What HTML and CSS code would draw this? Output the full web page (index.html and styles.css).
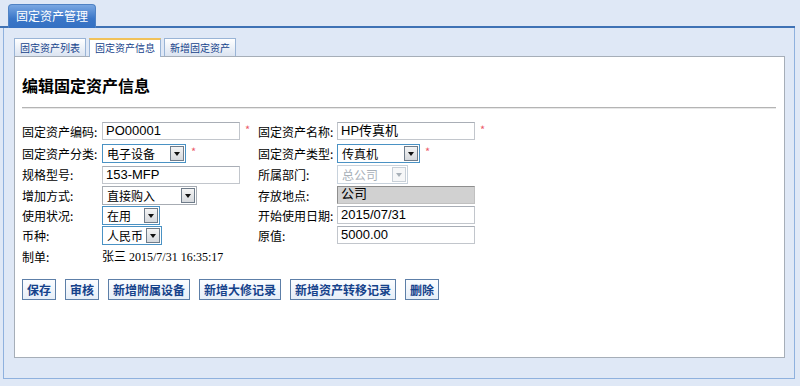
FILE: index.html
```html
<!DOCTYPE html>
<html lang="zh-CN">
<head>
    <meta charset="UTF-8">
    <title>固定资产管理</title>
    <link rel="stylesheet" href="styles.css">
</head>
<body>

    <div class="header">
        <div class="main-tab">固定资产管理</div>
    </div>

    <div class="panel">
        <div class="sub-tabs">
            <div class="sub-tab">固定资产列表</div>
            <div class="sub-tab active">固定资产信息</div>
            <div class="sub-tab">新增固定资产</div>
        </div>

        <div class="content">
            <h1>编辑固定资产信息</h1>
            <div class="rule"></div>

            <div class="form">
                <!-- row 1 -->
                <div class="label">固定资产编码:</div>
                <div class="field"><div class="input w138">PO00001</div><span class="req">*</span></div>
                <div class="label">固定资产名称:</div>
                <div class="field"><div class="input w138">HP传真机</div><span class="req">*</span></div>

                <!-- row 2 -->
                <div class="label">固定资产分类:</div>
                <div class="field">
                    <div class="select focus w84"><span class="sel-text">电子设备</span><span class="arrow"></span></div><span class="req">*</span>
                </div>
                <div class="label">固定资产类型:</div>
                <div class="field">
                    <div class="select focus w83"><span class="sel-text">传真机</span><span class="arrow"></span></div><span class="req">*</span>
                </div>

                <!-- row 3 -->
                <div class="label">规格型号:</div>
                <div class="field"><div class="input w138">153-MFP</div></div>
                <div class="label">所属部门:</div>
                <div class="field">
                    <div class="select disabled w71"><span class="sel-text">总公司</span><span class="arrow"></span></div>
                </div>

                <!-- row 4 -->
                <div class="label">增加方式:</div>
                <div class="field">
                    <div class="select w95"><span class="sel-text">直接购入</span><span class="arrow"></span></div>
                </div>
                <div class="label">存放地点:</div>
                <div class="field"><div class="input readonly w138">公司</div></div>

                <!-- row 5 -->
                <div class="label">使用状况:</div>
                <div class="field">
                    <div class="select focus w58"><span class="sel-text">在用</span><span class="arrow"></span></div>
                </div>
                <div class="label">开始使用日期:</div>
                <div class="field"><div class="input w138">2015/07/31</div></div>

                <!-- row 6 -->
                <div class="label">币种:</div>
                <div class="field">
                    <div class="select focus w60"><span class="sel-text">人民币</span><span class="arrow"></span></div>
                </div>
                <div class="label">原值:</div>
                <div class="field"><div class="input w138">5000.00</div></div>

                <!-- row 7 -->
                <div class="label">制单:</div>
                <div class="field maker">张三 2015/7/31 16:35:17</div>
                <div></div>
                <div></div>
            </div>

            <div class="buttons">
                <button>保存</button>
                <button>审核</button>
                <button>新增附属设备</button>
                <button>新增大修记录</button>
                <button>新增资产转移记录</button>
                <button>删除</button>
            </div>
        </div>
    </div>

</body>
</html>
```

FILE: styles.css
```css
body {
    margin: 0;
    background-color: #dfe8f6;
    font-family: "Noto Sans CJK SC", sans-serif;
    font-size: 12px;
    color: #000;
}

/* top tab strip */
.header {
    width: 795px;
    height: 28px;
    padding-top: 4px;
    box-sizing: border-box;
    padding-left: 8px;
    border-bottom: 2px solid #3f72b5;
}
.main-tab {
    width: 88px;
    height: 24px;
    box-sizing: border-box;
    border: 1px solid #4f82c4;
    border-bottom: none;
    border-radius: 4px 4px 0 0;
    background: linear-gradient(#79a7e2, #3a76c8 60%, #3470c2);
    color: #fff;
    font-size: 12px;
    line-height: 22px;
    text-align: center;
}

.panel {
    margin-left: 3px;
    width: 792px;
    height: 351px;
    box-sizing: border-box;
    border: 1px solid #8fb1de;
    border-top: none;
    padding: 10px 9px 0 10px;
}

/* inner tabs */
.sub-tabs {
    display: flex;
    gap: 3px;
    height: 18px;
}
.sub-tab {
    width: 72px;
    height: 18px;
    box-sizing: border-box;
    border: 1px solid #99b4d6;
    border-bottom: none;
    background: linear-gradient(#ffffff, #dbe4f1);
    color: #15428b;
    font-size: 10px;
    line-height: 17px;
    text-align: center;
}
.sub-tab.active {
    background: #fff;
    border-top: 2px solid #f1c25a;
    line-height: 15px;
    height: 19px;
    margin-bottom: -1px;
    position: relative;
}

.content {
    height: 302px;
    box-sizing: border-box;
    background: #fff;
    border: 1px solid #a6aeb8;
    padding: 18px 8px 0 7px;
}

h1 {
    margin: 0;
    font-size: 16px;
    line-height: 20px;
    font-weight: bold;
}
.rule {
    margin-top: 12px;
    border-top: 1px solid #b4b4b4;
    border-bottom: 1px solid #e8e8e8;
}

/* form grid */
.form {
    display: grid;
    grid-template-columns: 80px 156px 79px 160px;
    grid-template-rows: 22px 22px 21px 20px 20px 20px 22px;
    margin-top: 11px;
    align-items: center;
}
.label {
    font-size: 12px;
    white-space: nowrap;
}
.field {
    display: flex;
    align-items: center;
}
.input {
    height: 18px;
    box-sizing: border-box;
    border: 1px solid #c2c6cc;
    border-top-color: #a9aeb6;
    padding-left: 3px;
    font-family: "Liberation Sans", "Noto Sans CJK SC", sans-serif;
    font-size: 13px;
    line-height: 16px;
    background: #fff;
}
.input.readonly {
    background: #d1d1d1;
    border-color: #8e8e8e #c0c0c0 #c0c0c0 #8e8e8e;
    line-height: 14px;
}
.req {
    color: #ec5a6a;
    font-size: 11px;
    margin-left: 5px;
    align-self: flex-start;
    line-height: 12px;
    margin-top: 1px;
}

.select {
    height: 19px;
    box-sizing: border-box;
    border: 1px solid #a7acb3;
    display: flex;
    align-items: center;
    background: #fff;
}
.select.focus {
    border-color: #4a92c4;
}
.sel-text {
    flex: 1;
    padding-left: 4px;
    font-size: 12px;
    line-height: 17px;
    white-space: nowrap;
    overflow: hidden;
}
.arrow {
    flex: none;
    width: 14px;
    height: 15px;
    box-sizing: border-box;
    margin-right: 1px;
    border: 1px solid #6f7c8a;
    background: linear-gradient(#f4f4f4, #d6d9dd);
    position: relative;
}
.arrow::after {
    content: "";
    position: absolute;
    left: 3px;
    top: 5px;
    border-left: 3.5px solid transparent;
    border-right: 3.5px solid transparent;
    border-top: 4px solid #111;
}
.select.disabled {
    border-color: #c8d2dc;
}
.select.disabled .sel-text {
    color: #a8b0b8;
}
.select.disabled .arrow {
    border-color: #c8d0d8;
    background: #f6f7f8;
}
.select.disabled .arrow::after {
    border-top-color: #a8b0b8;
}

.w138 { width: 138px; }
.w84 { width: 84px; }
.w83 { width: 83px; }
.w71 { width: 71px; }
.w95 { width: 95px; }
.w58 { width: 58px; }
.w60 { width: 60px; }

.maker {
    font-family: "Liberation Serif", "Noto Sans CJK SC", serif;
    font-size: 12px;
    white-space: nowrap;
}

/* action buttons */
.buttons {
    display: flex;
    gap: 9px;
    margin-top: 12px;
}
button {
    height: 21px;
    padding: 0 4px;
    border: 1px solid #5d7fa8;
    background: linear-gradient(#fbfdff, #e6eef8);
    color: #15428b;
    font-family: "Noto Sans CJK SC", sans-serif;
    font-size: 12px;
    font-weight: bold;
    line-height: 19px;
    cursor: pointer;
}
```
